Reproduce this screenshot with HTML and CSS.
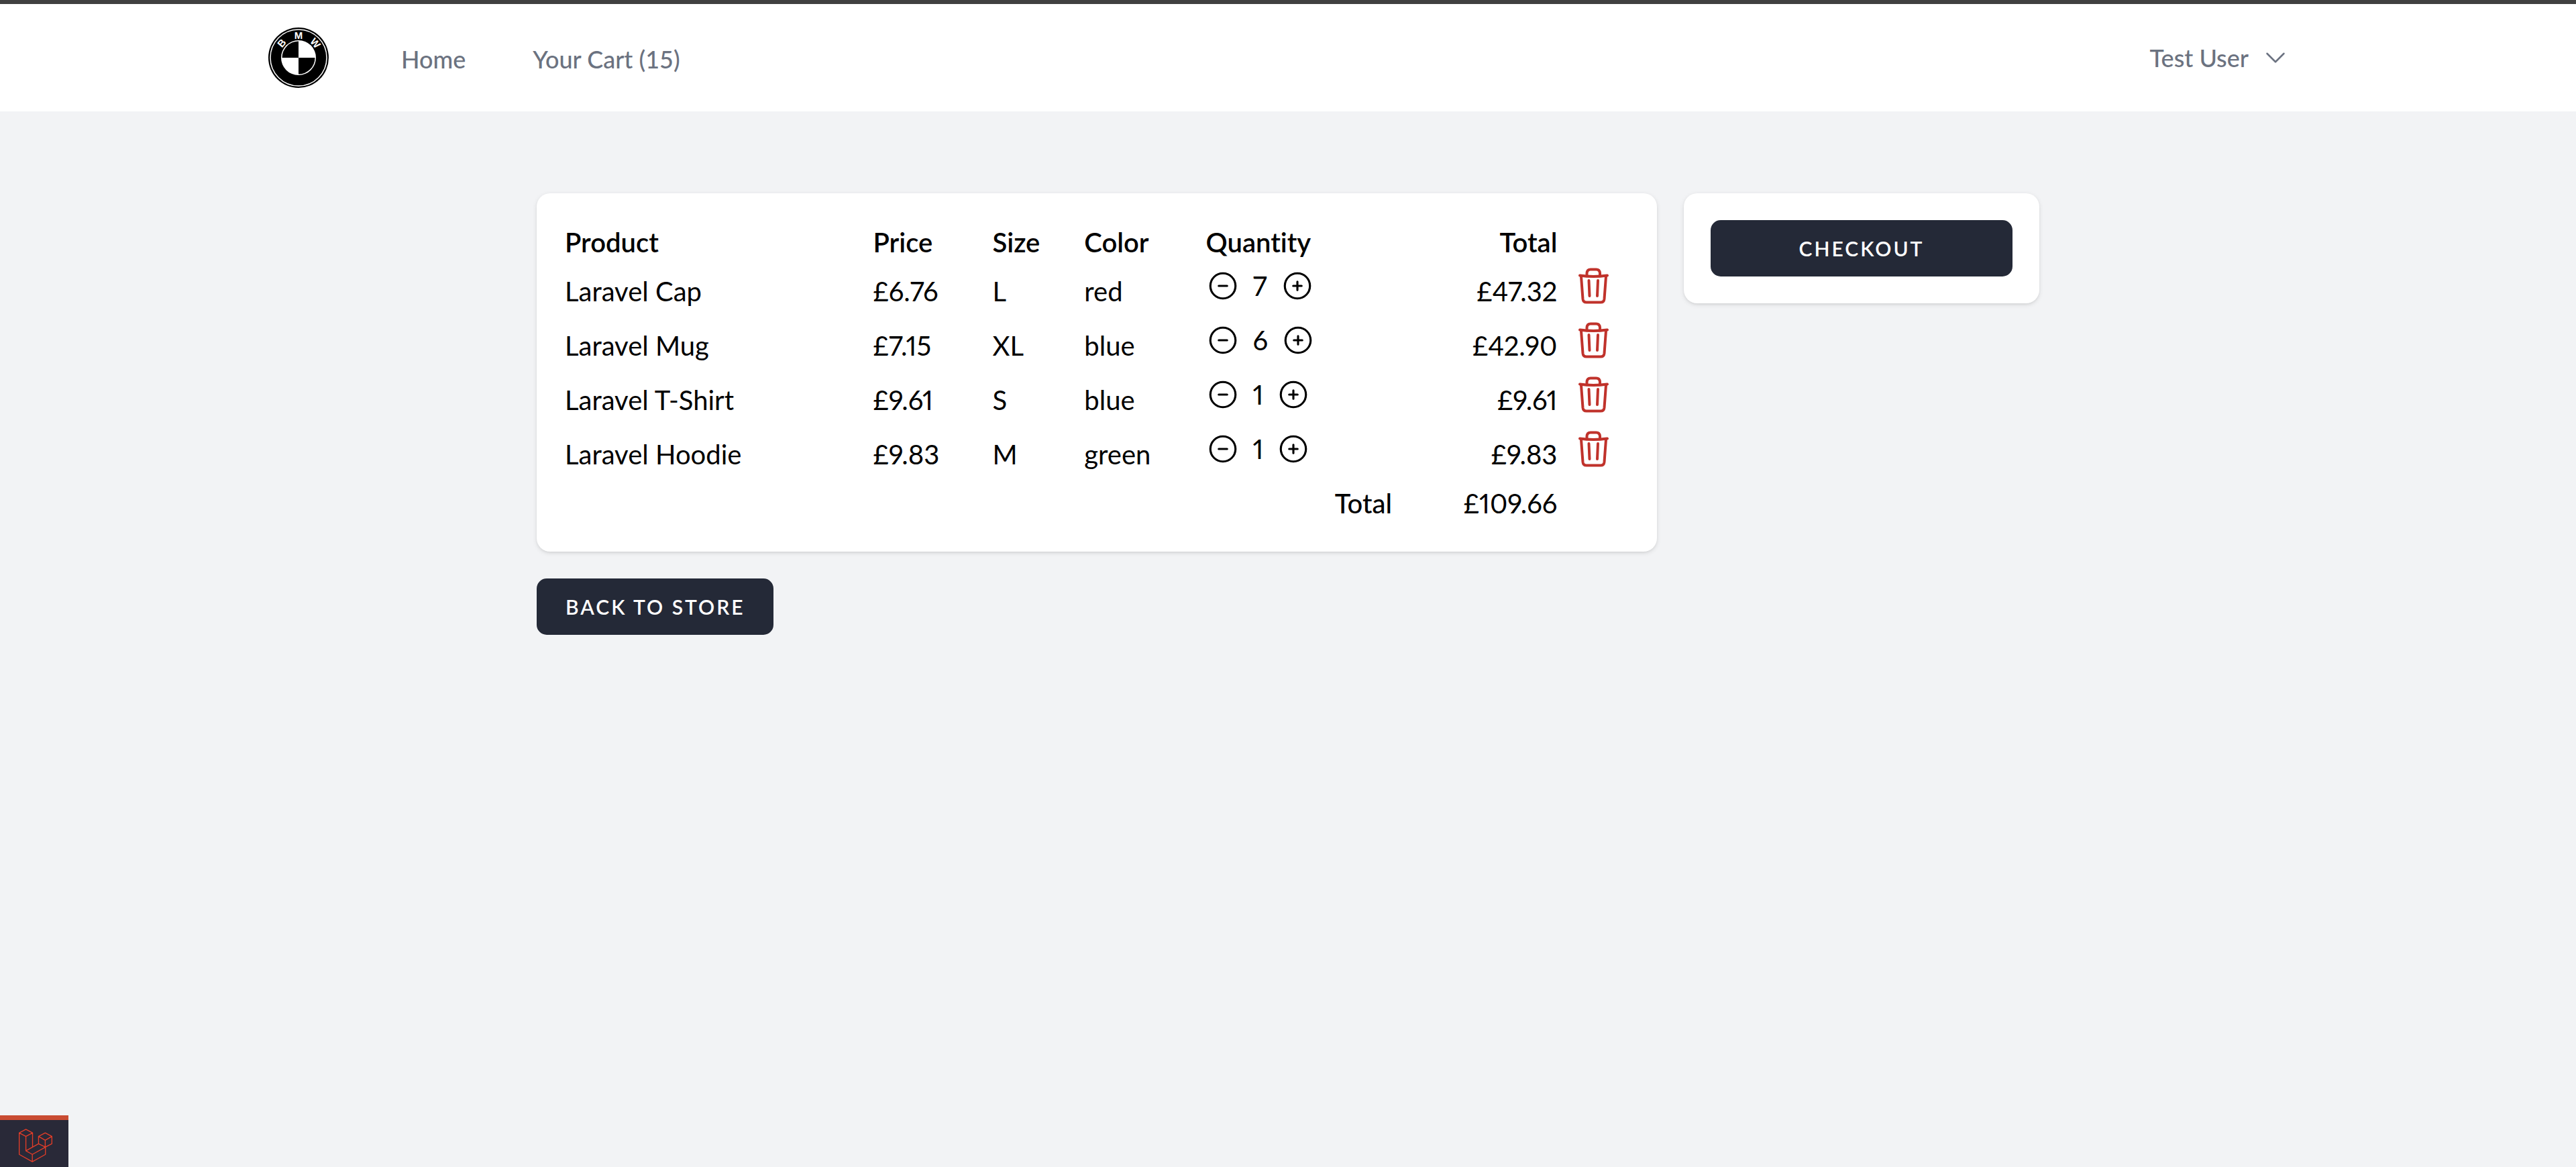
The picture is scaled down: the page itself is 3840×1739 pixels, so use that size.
FILE: index.html
```html
<!DOCTYPE html>
<html lang="en">
<head>
<meta charset="utf-8">
<meta name="viewport" content="width=device-width, initial-scale=1">
<title>Your Cart</title>
<link rel="stylesheet" href="styles.css">
</head>
<body>
<svg class="sprite" aria-hidden="true">
  <symbol id="minus" viewBox="0 0 24 24"><path d="M15 12H9m12 0a9 9 0 1 1-18 0 9 9 0 0 1 18 0Z"/></symbol>
  <symbol id="plus" viewBox="0 0 24 24"><path d="M12 9v6m3-3H9m12 0a9 9 0 1 1-18 0 9 9 0 0 1 18 0Z"/></symbol>
  <symbol id="trash" viewBox="0 0 60 60">
    <path d="M10 14.500Q30 17.500 51 14.500"/>
    <path d="M20.500 14.500V11Q21 5.500 26 5.500H34.500Q39.500 5.500 40 11V14.500"/>
    <path d="M12 16L14.500 49.500Q15 54.500 20 54.500H41Q46 54.500 46.500 49.500L49 16"/>
    <path d="M23.500 22L24.500 45M37 22L36 45"/>
  </symbol>
</svg>

<header class="nav">
  <div class="nav-inner">
    <a class="logo" href="#" aria-label="BMW">
      <svg viewBox="-45 -45 90 90">
        <circle r="45"/>
        <circle class="ring" r="42"/>
        <circle class="white" r="26"/>
        <path d="M0 0H-24.500A24.500 24.500 0 0 1 0 -24.500ZM0 0H24.500A24.500 24.500 0 0 1 0 24.500Z"/>
        <text y="-28" transform="rotate(-49)">B</text>
        <text y="-28">M</text>
        <text y="-28" transform="rotate(49)">W</text>
      </svg>
    </a>
    <nav class="links">
      <a href="#">Home</a>
      <a href="#">Your Cart (15)</a>
    </nav>
    <button class="user" type="button">
      Test User
      <svg viewBox="0 0 24 24" aria-hidden="true"><path d="m19.500 8.250-7.500 7.500-7.500-7.500"/></svg>
    </button>
  </div>
</header>

<main class="page">
  <section class="card cart">
    <table>
      <colgroup>
        <col class="c-product"><col class="c-price"><col class="c-size"><col class="c-color"><col class="c-qty"><col class="c-total"><col>
      </colgroup>
      <thead>
        <tr><th>Product</th><th>Price</th><th>Size</th><th>Color</th><th>Quantity</th><th class="num">Total</th><td></td></tr>
      </thead>
      <tbody>
        <tr>
          <td>Laravel Cap</td><td>£6.76</td><td>L</td><td>red</td>
          <td class="top"><div class="qty"><button type="button" aria-label="Decrease"><svg><use href="#minus"/></svg></button><span>7</span><button type="button" aria-label="Increase"><svg><use href="#plus"/></svg></button></div></td>
          <td class="num">£47.32</td>
          <td class="top"><button class="remove" type="button" aria-label="Remove"><svg><use href="#trash"/></svg></button></td>
        </tr>
        <tr>
          <td>Laravel Mug</td><td>£7.15</td><td>XL</td><td>blue</td>
          <td class="top"><div class="qty"><button type="button" aria-label="Decrease"><svg><use href="#minus"/></svg></button><span>6</span><button type="button" aria-label="Increase"><svg><use href="#plus"/></svg></button></div></td>
          <td class="num">£42.90</td>
          <td class="top"><button class="remove" type="button" aria-label="Remove"><svg><use href="#trash"/></svg></button></td>
        </tr>
        <tr>
          <td>Laravel T-Shirt</td><td>£9.61</td><td>S</td><td>blue</td>
          <td class="top"><div class="qty"><button type="button" aria-label="Decrease"><svg><use href="#minus"/></svg></button><span>1</span><button type="button" aria-label="Increase"><svg><use href="#plus"/></svg></button></div></td>
          <td class="num">£9.61</td>
          <td class="top"><button class="remove" type="button" aria-label="Remove"><svg><use href="#trash"/></svg></button></td>
        </tr>
        <tr>
          <td>Laravel Hoodie</td><td>£9.83</td><td>M</td><td>green</td>
          <td class="top"><div class="qty"><button type="button" aria-label="Decrease"><svg><use href="#minus"/></svg></button><span>1</span><button type="button" aria-label="Increase"><svg><use href="#plus"/></svg></button></div></td>
          <td class="num">£9.83</td>
          <td class="top"><button class="remove" type="button" aria-label="Remove"><svg><use href="#trash"/></svg></button></td>
        </tr>
      </tbody>
      <tfoot>
        <tr><th class="num sum" colspan="5" scope="row">Total</th><td class="num">£109.66</td><td></td></tr>
      </tfoot>
    </table>
  </section>
  <aside class="card">
    <button class="btn wide" type="button">CHECKOUT</button>
  </aside>
  <a class="btn back" href="#">BACK TO STORE</a>
</main>

<button class="debugbar" type="button" aria-label="Open debug bar">
  <svg viewBox="84 126 151 150" aria-hidden="true">
    <path d="M86 144L116 128L146 144L116 160ZM86 144V241L145 274L204 241V208L145 241V274M116 160V225L145 241M146 144V208M116 225L173 193L204 208M173 160L203 144L233 160L203 177ZM173 160V193M203 177V208L233 193V160"/>
  </svg>
</button>
</body>
</html>
```
FILE: styles.css
```css
*, *::before, *::after { box-sizing: border-box; }

body {
  margin: 0;
  min-height: 100vh;
  border-top: 6px solid #404040;
  background: #f2f3f5;
  color: #000;
  font: 400 40px/60px Lato, "Open Sans", sans-serif;
  font-variant-ligatures: no-common-ligatures;
  font-variant-numeric: proportional-nums;
}

button {
  padding: 0;
  border: 0;
  background: none;
  color: inherit;
  font: inherit;
  cursor: pointer;
}

a { color: inherit; text-decoration: none; }
svg { display: block; }
.sprite { position: absolute; width: 0; height: 0; }

/* Navigation */
.nav {
  background: #fff;
  border-bottom: 2px solid #f2f3f5;
}

.nav-inner {
  display: flex;
  align-items: center;
  max-width: 3200px;
  height: 160px;
  margin: 0 auto;
  padding: 0 80px;
  color: #6b7280;
  font-size: 36px;
  font-weight: 500;
  font-variant-numeric: tabular-nums;
  line-height: 50px;
}

.logo svg { width: 90px; height: 90px; }
.logo .ring { fill: none; stroke: #fff; stroke-width: 1.5; }
.logo .white, .logo text { fill: #fff; }
.logo text {
  font: 700 15px "Liberation Sans", sans-serif;
  text-anchor: middle;
}

.links {
  display: flex;
  gap: 100px;
  margin-left: 108px;
  padding-top: 4px;
}

.user {
  display: flex;
  align-items: center;
  gap: 20px;
  margin-left: auto;
  padding-right: 28px;
}

.user svg {
  width: 40px;
  height: 40px;
  fill: none;
  stroke: currentColor;
  stroke-width: 1.5;
  stroke-linecap: round;
  stroke-linejoin: round;
}

/* Page */
.page {
  display: grid;
  grid-template-columns: repeat(4, 1fr);
  gap: 40px;
  align-items: start;
  max-width: 2240px;
  margin: 120px auto 0;
}

.card {
  padding: 40px;
  border-radius: 20px;
  background: #fff;
  box-shadow: 0 2px 7px rgba(0, 0, 0, .1), 0 2px 5px -2px rgba(0, 0, 0, .1);
}

.cart { grid-column: span 3; }

/* Cart table */
table {
  width: 100%;
  border-collapse: collapse;
  table-layout: fixed;
}

.c-product { width: 28.9%; }
.c-price { width: 11.2%; }
.c-size { width: 8.6%; }
.c-color { width: 11.4%; }
.c-qty { width: 17.7%; }
.c-total { width: 15.5%; }

th, td { height: 65px; padding: 0 2px; text-align: left; vertical-align: middle; }
th { font-weight: 600; }
tbody td { height: 81px; }
.num { text-align: right; }
.sum { font-weight: 500; }
tbody .top { padding-top: 3px; vertical-align: top; }

.qty {
  display: flex;
  align-items: center;
  gap: 20px;
}

.qty svg {
  width: 50px;
  height: 50px;
  fill: none;
  stroke: currentColor;
  stroke-width: 1.5;
  stroke-linecap: round;
  stroke-linejoin: round;
}

.remove { display: block; margin-left: 20px; color: #c0322b; }

.remove svg {
  width: 60px;
  height: 60px;
  fill: none;
  stroke: currentColor;
  stroke-width: 4;
  stroke-linecap: round;
  stroke-linejoin: round;
}

/* Buttons */
.btn {
  display: block;
  padding: 17px 43px;
  border-radius: 15px;
  background: #242937;
  color: #fff;
  font-size: 30px;
  font-weight: 600;
  line-height: 50px;
  letter-spacing: 3px;
  text-align: center;
}

.wide { width: 100%; }
.back { justify-self: start; }

/* Debug bar launcher */
.debugbar {
  position: fixed;
  left: 0;
  bottom: 0;
  width: 102px;
  height: 77px;
  padding: 13px 24px 7px 28px;
  border-top: 7px solid #c94b32;
  background: #292938;
}

.debugbar svg {
  width: 50px;
  height: 50px;
  fill: none;
  stroke: #e23d28;
  stroke-width: 4;
  stroke-linejoin: round;
}
```
